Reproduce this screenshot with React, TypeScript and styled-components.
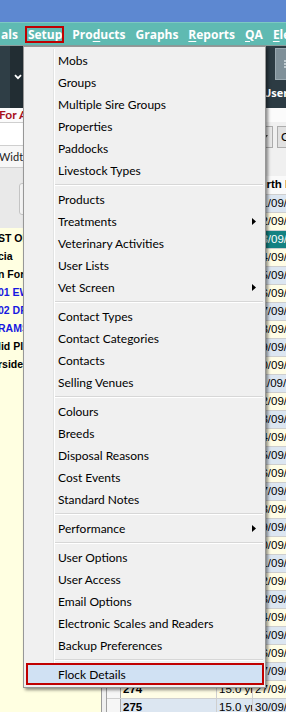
import React from 'react'
import styled, { createGlobalStyle } from 'styled-components'

type MenuEntry = { label: string, sub?: boolean, selected?: boolean }

const menuGroups: MenuEntry[][] = [
    [{ label: 'Mobs' }, { label: 'Groups' }, { label: 'Multiple Sire Groups' }, { label: 'Properties' }, { label: 'Paddocks' }, { label: 'Livestock Types' }],
    [{ label: 'Products' }, { label: 'Treatments', sub: true }, { label: 'Veterinary Activities' }, { label: 'User Lists' }, { label: 'Vet Screen', sub: true }],
    [{ label: 'Contact Types' }, { label: 'Contact Categories' }, { label: 'Contacts' }, { label: 'Selling Venues' }],
    [{ label: 'Colours' }, { label: 'Breeds' }, { label: 'Disposal Reasons' }, { label: 'Cost Events' }, { label: 'Standard Notes' }],
    [{ label: 'Performance', sub: true }],
    [{ label: 'User Options' }, { label: 'User Access' }, { label: 'Email Options' }, { label: 'Electronic Scales and Readers' }, { label: 'Backup Preferences' }],
    [{ label: 'Flock Details', selected: true }],
]

const leftRows = [
    { text: 'ST OF MOB', blue: false },
    { text: 'cia', blue: false },
    { text: 'n For Sale', blue: false },
    { text: '01 EWES', blue: true },
    { text: '02 DRY', blue: true },
    { text: 'RAMS', blue: true },
    { text: 'lid Pl', blue: false },
    { text: 'rside', blue: false },
]

const gridRows = Array.from({ length: 29 }, (_, k) => ({
    tag: String(247 + k),
    age: '15.0 yr',
    date: `${String(k === 27 ? 27 : k === 28 ? 30 : (k % 28) + 1).padStart(2, '0')}/09/2020`,
}))

const GlobalStyle = createGlobalStyle`
    html, body {
        margin: 0;
        padding: 0;
        background: #ffffff;
    }
    body {
        font-family: 'Lato', 'Liberation Sans', sans-serif;
    }
`

const App: React.FC = () => {
    return (
        <>
            <GlobalStyle />
            <Screen>
                <TitleBar />
                <MenuBar>
                    <MenuBarItem $first>als</MenuBarItem>
                    <MenuBarItem $active><u>S</u>etup</MenuBarItem>
                    <MenuBarItem>Pro<u>d</u>ucts</MenuBarItem>
                    <MenuBarItem>Graphs</MenuBarItem>
                    <MenuBarItem><u>R</u>eports</MenuBarItem>
                    <MenuBarItem><u>Q</u>A</MenuBarItem>
                    <MenuBarItem><u>E</u>lectronic</MenuBarItem>
                </MenuBar>

                <Toolbar>
                    <ToolSeg />
                    <DropSeg>
                        <svg width="8" height="6" viewBox="0 0 8 6">
                            <path d="M1 1.2 L4 4.2 L7 1.2" stroke="#ffffff" strokeWidth="1.8" fill="none" />
                        </svg>
                    </DropSeg>
                    <ToolSpacer />
                    <ToolButton>
                        <IconBox>
                            <svg width="12" height="12" viewBox="0 0 12 12">
                                <path d="M2 3h8M2 6h8M2 9h8" stroke="#d7dfe3" strokeWidth="1.4" />
                            </svg>
                        </IconBox>
                        <ToolLabel>User</ToolLabel>
                    </ToolButton>
                </Toolbar>

                <Body>
                    <LeftPane>
                        <SearchLabel>For Animal</SearchLabel>
                        <SearchInput />
                        <WidthRow>Width</WidthRow>
                        <GreyArea>
                            <SideButton />
                        </GreyArea>
                        <MobList>
                            {leftRows.map(row => (
                                <MobRow key={row.text} $blue={row.blue}>{row.text}</MobRow>
                            ))}
                        </MobList>
                    </LeftPane>

                    <RightPane>
                        <Controls>
                            <Combo>
                                <svg width="6" height="4" viewBox="0 0 6 4">
                                    <path d="M0 0 L6 0 L3 4 Z" fill="#444444" />
                                </svg>
                            </Combo>
                            <ClearButton>Clear</ClearButton>
                        </Controls>
                        <Grid>
                            <GridRow $header>
                                <RowHead />
                                <Cell $w={96} $bold>Tag</Cell>
                                <Cell $w={36} $bold>Age</Cell>
                                <Cell $w={120} $bold>Birth Date</Cell>
                            </GridRow>
                            {gridRows.map((row, k) => (
                                <GridRow key={row.tag} $tone={k === 2 ? 'selected' : k % 2 === 0 ? 'blue' : 'yellow'}>
                                    <RowHead />
                                    <Cell $w={96} $bold>{row.tag}</Cell>
                                    <Cell $w={36}>{row.age}</Cell>
                                    <Cell $w={120}>{row.date}</Cell>
                                </GridRow>
                            ))}
                        </Grid>
                    </RightPane>
                </Body>

                <Dropdown>
                    {menuGroups.map((group, g) => (
                        <React.Fragment key={g}>
                            {g > 0 && <Separator />}
                            {group.map(entry => (
                                <DropItem key={entry.label} $selected={entry.selected}>
                                    {entry.label}
                                    {entry.sub && (
                                        <SubArrow width="4" height="7" viewBox="0 0 4 7">
                                            <path d="M0 0 L4 3.5 L0 7 Z" fill="#000000" />
                                        </SubArrow>
                                    )}
                                </DropItem>
                            ))}
                        </React.Fragment>
                    ))}
                </Dropdown>
            </Screen>
        </>
    )
}

const Screen = styled.div`
    position: relative;
    width: 286px;
    height: 712px;
    overflow: hidden;
    display: flex;
    flex-direction: column;
`

const TitleBar = styled.div`
    height: 22px;
    flex: none;
    background-color: #5d88d1;
`

const MenuBar = styled.div`
    height: 24px;
    flex: none;
    box-sizing: border-box;
    display: flex;
    align-items: center;
    white-space: nowrap;
    background-color: #5fbab2;
    border-top: 1px solid #7cc9c2;
    border-bottom: 1px solid #8c9d9c;
`

const MenuBarItem = styled.div<{ $first?: boolean, $active?: boolean }>`
    height: 17px;
    box-sizing: border-box;
    display: flex;
    align-items: center;
    padding: ${p => p.$active ? '0 2px 0 3px' : '0 5px'};
    margin: ${p => p.$first ? '0 0 0 -4px' : p.$active ? '0 3px 0 2px' : '0'};
    font-family: 'Open Sans', 'Liberation Sans', sans-serif;
    font-weight: 700;
    font-size: 12px;
    color: #ffffff;
    outline: ${p => p.$active ? '2px solid #c00000' : 'none'};
    outline-offset: -2px;

    & u {
        text-underline-offset: 2px;
    }
`

const Toolbar = styled.div`
    height: 62px;
    flex: none;
    display: flex;
    background-color: #2c3b43;
`

const ToolSeg = styled.div`
    width: 10px;
    flex: none;
    background-color: #2f3e46;
`

const DropSeg = styled.div`
    width: 13px;
    flex: none;
    display: flex;
    justify-content: center;
    align-items: center;
    padding-left: 1px;
    background-color: #222d33;
`

const ToolSpacer = styled.div`
    width: 238px;
    flex: none;
`

const ToolButton = styled.div`
    width: 52px;
    flex: none;
    display: flex;
    flex-direction: column;
    align-items: flex-start;
`

const IconBox = styled.div`
    width: 26px;
    height: 32px;
    margin: 2px 0 0 13px;
    box-sizing: border-box;
    display: flex;
    align-items: center;
    justify-content: center;
    background-color: #7f9099;
    border: 1px solid #9aa9b1;
`

const ToolLabel = styled.div`
    margin: 5px 0 0 1px;
    white-space: nowrap;
    font-family: 'Open Sans', 'Liberation Sans', sans-serif;
    font-weight: 700;
    font-size: 11px;
    color: #ffffff;
`

const Body = styled.div`
    flex: 1;
    display: flex;
    min-height: 0;
`

const LeftPane = styled.div`
    width: 101px;
    flex: none;
    display: flex;
    flex-direction: column;
    border-right: 1px solid #9a9a9a;
    overflow: hidden;
`

const SearchLabel = styled.div`
    height: 14px;
    line-height: 14px;
    margin-left: -1px;
    white-space: nowrap;
    background-color: #fbfbfb;
    color: #a8101a;
    font-family: 'Lato', 'Liberation Sans', sans-serif;
    font-weight: 700;
    font-size: 12px;
`

const SearchInput = styled.div`
    height: 24px;
    box-sizing: border-box;
    background-color: #ffffff;
    border-top: 1px solid #cfcfcf;
    border-bottom: 1px solid #cfcfcf;
`

const WidthRow = styled.div`
    height: 22px;
    box-sizing: border-box;
    line-height: 22px;
    margin-left: -1px;
    background-color: #f7f7f7;
    border-bottom: 1px solid #cfcfcf;
    color: #222222;
    font-size: 11px;
`

const GreyArea = styled.div`
    height: 60px;
    box-sizing: border-box;
    padding: 15px 0 0 19px;
    background-color: #e9e9e9;
`

const SideButton = styled.div`
    width: 40px;
    height: 32px;
    box-sizing: border-box;
    border: 1px solid #c4c4c4;
    border-radius: 3px;
    background-color: #f4f4f4;
`

const MobList = styled.div`
    flex: 1;
    padding-top: 1px;
    background-color: #ffffe1;
`

const MobRow = styled.div<{ $blue: boolean }>`
    height: 18px;
    line-height: 18px;
    margin-left: -2px;
    white-space: nowrap;
    font-family: 'Liberation Sans', sans-serif;
    font-weight: 700;
    font-size: 10.5px;
    color: ${p => p.$blue ? '#1717e0' : '#000000'};
`

const RightPane = styled.div`
    flex: 1;
    min-width: 0;
    display: flex;
    flex-direction: column;
    background-color: #f0f0f0;
    overflow: hidden;
`

const Controls = styled.div`
    height: 68px;
    flex: none;
    box-sizing: border-box;
    display: flex;
    align-items: flex-start;
    gap: 4px;
    padding: 18px 0 0 4px;
    background: linear-gradient(#fbfbfb 0 14px, #f0f0f0 14px);
`

const Combo = styled.div`
    width: 167px;
    height: 22px;
    flex: none;
    box-sizing: border-box;
    display: flex;
    align-items: center;
    justify-content: flex-end;
    padding-right: 4px;
    background-color: #e8e8e8;
    border: 1px solid #acacac;
`

const ClearButton = styled.div`
    width: 50px;
    height: 22px;
    flex: none;
    box-sizing: border-box;
    padding-left: 3px;
    line-height: 20px;
    background-color: #e1e1e1;
    border: 1px solid #adadad;
    color: #000000;
    font-size: 12px;
`

const Grid = styled.div`
    margin-left: 4px;
    border-left: 1px solid #a0a0a0;
    background-color: #ffffff;
`

const toneColors = {
    blue: { bg: '#dce6f1', fg: '#000000' },
    yellow: { bg: '#fffde6', fg: '#000000' },
    selected: { bg: '#148282', fg: '#ffffff' },
}

const GridRow = styled.div<{ $header?: boolean, $tone?: keyof typeof toneColors }>`
    display: flex;
    height: ${p => p.$header ? '19px' : '18px'};
    box-sizing: border-box;
    border-bottom: 1px solid #cfcfcf;
    white-space: nowrap;
    background-color: ${p => p.$tone ? toneColors[p.$tone].bg : '#fafafa'};
    color: ${p => p.$tone ? toneColors[p.$tone].fg : '#000000'};
`

const RowHead = styled.div`
    width: 14px;
    flex: none;
    box-sizing: border-box;
    background-color: #f6f6f6;
    border-right: 1px solid #a8a8a8;
`

const Cell = styled.div<{ $w: number, $bold?: boolean }>`
    width: ${p => p.$w}px;
    flex: none;
    box-sizing: border-box;
    overflow: hidden;
    padding-left: 2px;
    border-right: 1px solid #cfcfcf;
    line-height: 17px;
    font-family: 'Liberation Sans', sans-serif;
    font-size: 11.5px;
    font-weight: ${p => p.$bold ? 700 : 400};
`

const Dropdown = styled.div`
    position: absolute;
    left: 23px;
    top: 46px;
    width: 243px;
    box-sizing: border-box;
    padding: 2px 1px 2px 2px;
    background-color: #f0f0f0;
    border: 1px solid #979797;
    box-shadow: 2px 2px 3px rgba(0, 0, 0, 0.45);

    &::before {
        content: '';
        position: absolute;
        left: 29px;
        top: 2px;
        bottom: 2px;
        width: 1px;
        background-color: #e2e3e3;
        border-right: 1px solid #ffffff;
    }
`

const DropItem = styled.div<{ $selected?: boolean }>`
    position: relative;
    z-index: 1;
    height: 22px;
    box-sizing: border-box;
    display: flex;
    align-items: center;
    white-space: nowrap;
    color: #000000;
    font-family: 'Lato', 'Liberation Sans', sans-serif;
    font-size: 12px;
    background-color: ${p => p.$selected ? '#d0e1f3' : 'transparent'};
    border: ${p => p.$selected ? '2px solid #c00000' : 'none'};
    padding-left: ${p => p.$selected ? '30px' : '32px'};
`

const SubArrow = styled.svg`
    margin-left: auto;
    margin-right: 8px;
`

const Separator = styled.div`
    height: 7px;
    margin: 0 1px 0 29px;
    background: linear-gradient(transparent 3px, #d7d7d7 3px, #d7d7d7 4px, #ffffff 4px, #ffffff 5px, transparent 5px);
`

export default App
